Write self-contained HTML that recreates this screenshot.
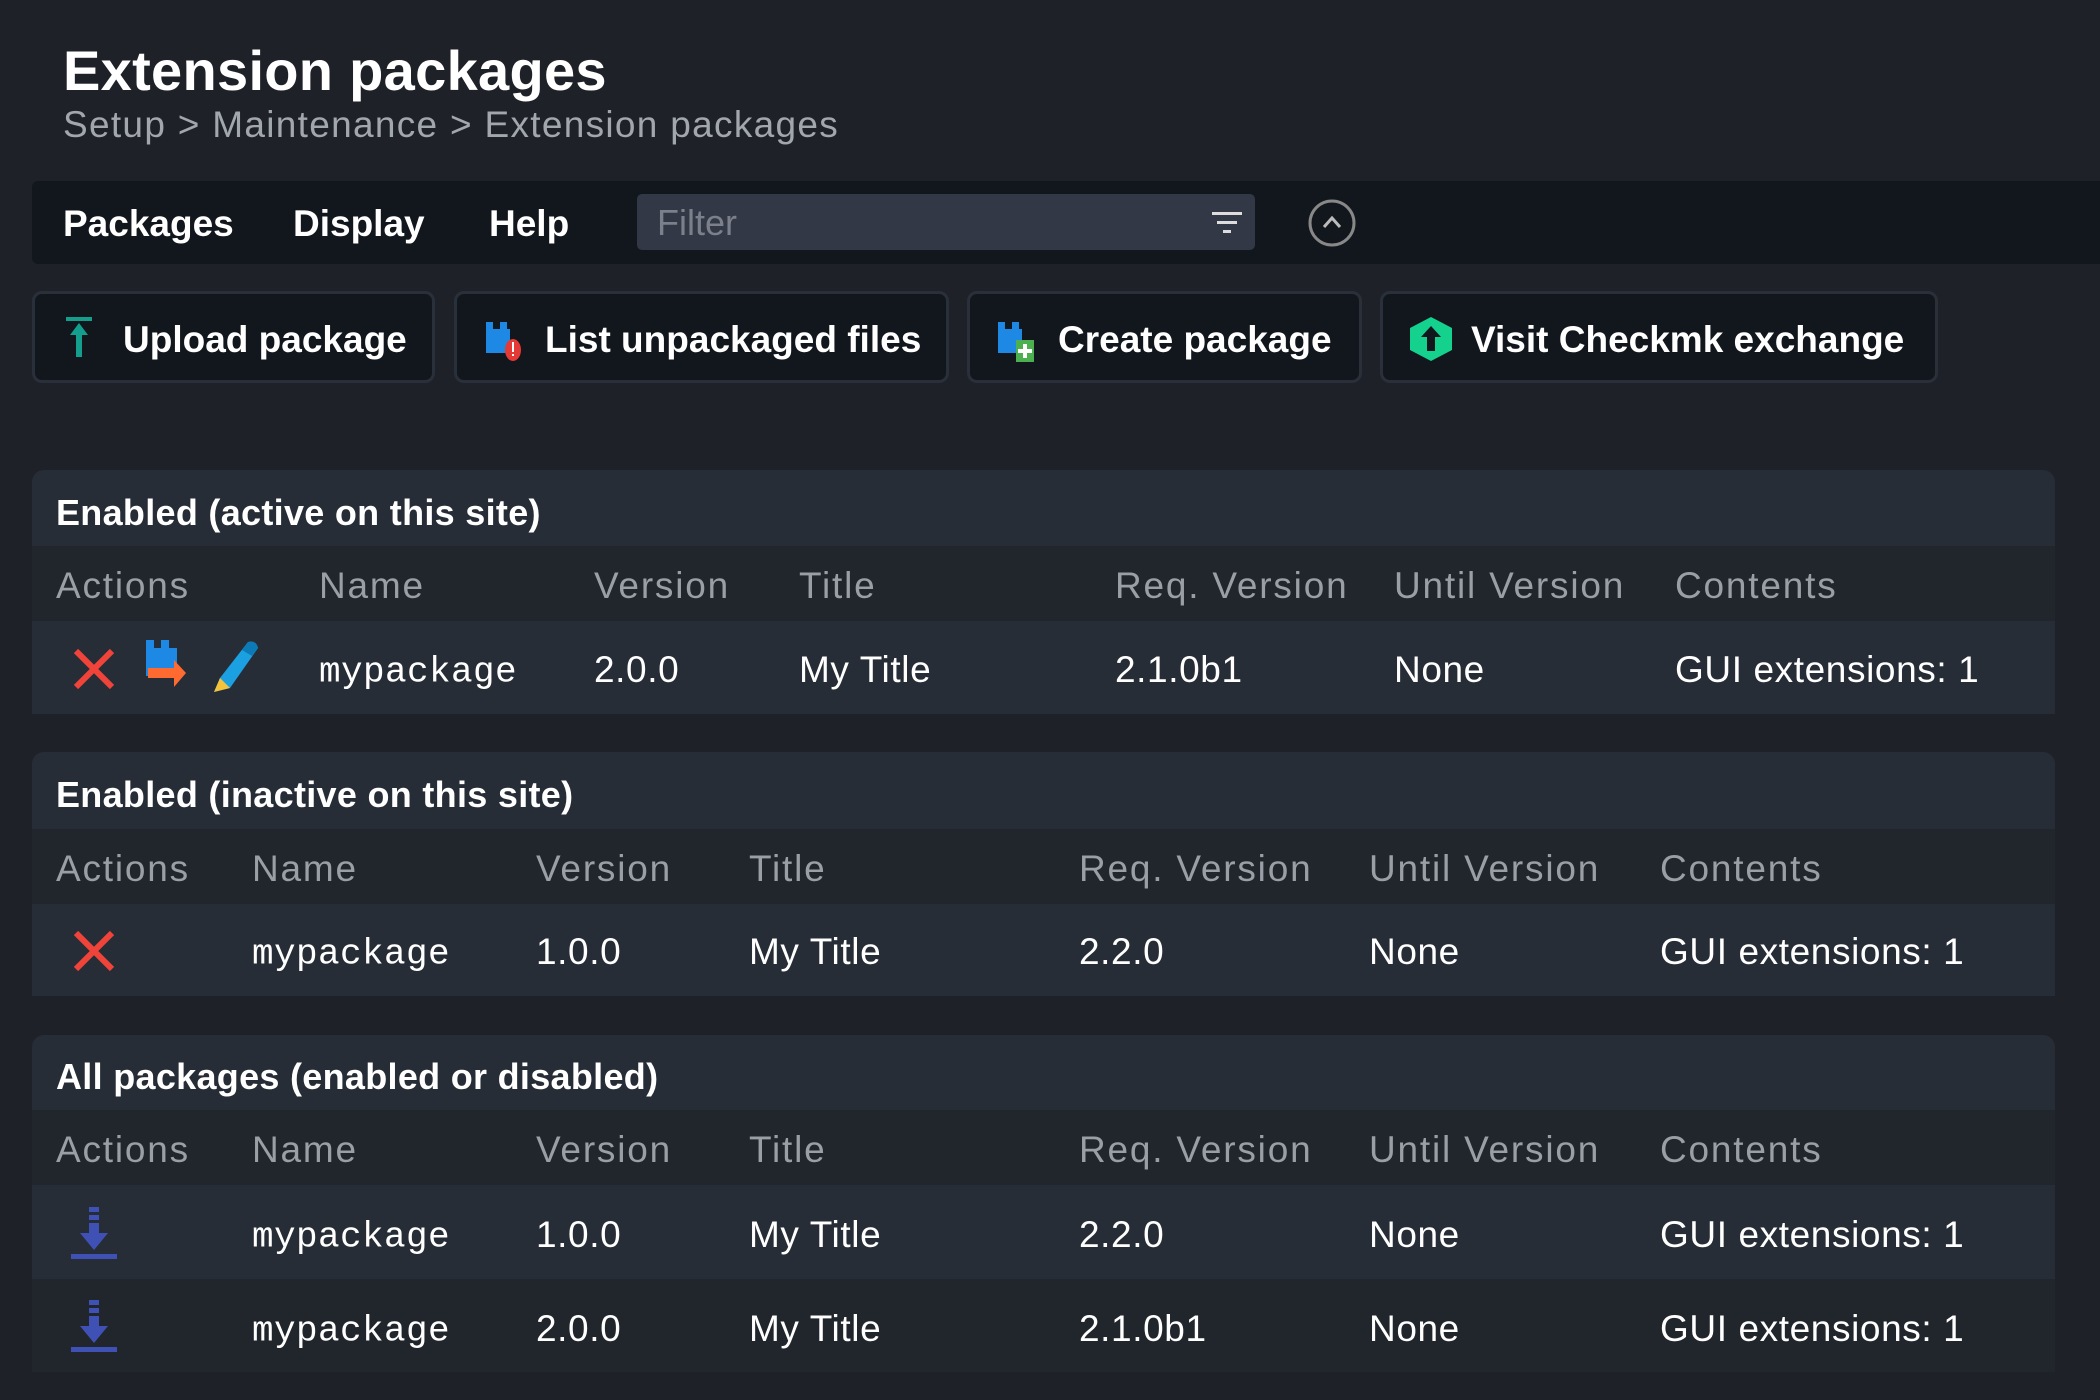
<!DOCTYPE html>
<html><head><meta charset="utf-8"><style>
*{margin:0;padding:0;box-sizing:border-box}
body{width:2100px;height:1400px;background:#1e2128;font-family:"Liberation Sans",sans-serif;color:#fff;position:relative;overflow:hidden}
.a{position:absolute;white-space:nowrap}
h1{position:absolute;left:63px;top:38px;font-size:56px;font-weight:bold;letter-spacing:0.3px}
.bc{left:63px;top:104px;font-size:37px;color:#a2a6ad;letter-spacing:1.3px}
.menu{left:32px;top:181px;width:2068px;height:83px;background:#12171d;border-radius:6px 0 0 6px}
.mi{top:224px;transform:translateY(-50%);font-size:37px;font-weight:bold}
.filter{left:637px;top:194px;width:618px;height:56px;background:#323845;border-radius:5px;color:#7b808a;font-size:36px;line-height:58px;padding-left:20px}
.btn{top:291px;height:92px;background:#12171d;border:3px solid #2a303a;border-radius:10px;font-size:37px;font-weight:bold;line-height:92px}
.sec{left:32px;width:2023px;background:#272d36;border-radius:12px 12px 0 0}
.st{font-size:36px;font-weight:bold;left:56px;letter-spacing:0.3px}
.hd{left:32px;width:2023px;background:#21252c}
.row{left:32px;width:2023px;background:#272d36}
.row2{background:#21252c}
.c{font-size:37px;transform:translateY(-50%);margin-top:2px;letter-spacing:0.6px}
.h{color:#9a9ea5;letter-spacing:1.8px}
.m{font-family:"Liberation Mono",monospace;font-size:36px;letter-spacing:0.4px}
</style></head><body>
<h1>Extension packages</h1>
<div class="a bc">Setup &gt; Maintenance &gt; Extension packages</div>
<div class="a menu"></div>
<div class="a mi" style="left:63px">Packages</div>
<div class="a mi" style="left:293px">Display</div>
<div class="a mi" style="left:489px">Help</div>
<div class="a filter">Filter</div>
<svg class="a" style="left:1212px;top:210px" width="30" height="26"><rect x="0" y="2" width="30" height="3" fill="#ddd"/><rect x="5" y="11" width="20" height="3" fill="#ddd"/><rect x="11" y="20" width="8" height="3" fill="#ddd"/></svg>
<svg class="a" style="left:1307px;top:198px" width="50" height="50"><circle cx="25" cy="25" r="22" fill="none" stroke="#888" stroke-width="3"/><path d="M17 29 L25 20 L33 29" fill="none" stroke="#bbb" stroke-width="3"/></svg>

<div class="a btn" style="left:32px;width:403px;padding-left:88px">Upload package</div>
<svg class="a" style="left:64px;top:316px" width="32" height="42"><rect x="2" y="1" width="26" height="4" fill="#149e8e"/><path d="M15 7 L24 19 L18 19 L18 41 L12 41 L12 19 L6 19Z" fill="#149e8e"/></svg>
<div class="a btn" style="left:454px;width:495px;padding-left:88px">List unpackaged files</div>
<svg class="a" style="left:486px;top:322px" width="38" height="42"><rect x="0" y="0" width="7" height="8" fill="#1e88e5"/><rect x="14" y="0" width="7" height="8" fill="#1e88e5"/><rect x="0" y="7" width="24" height="24" fill="#1e88e5"/><ellipse cx="27" cy="28" rx="8" ry="11" fill="#e53935"/><rect x="26" y="20" width="2" height="10" fill="#fff"/><rect x="26" y="32" width="2" height="2" fill="#fff"/></svg>
<div class="a btn" style="left:967px;width:395px;padding-left:88px">Create package</div>
<svg class="a" style="left:998px;top:322px" width="40" height="42"><rect x="0" y="0" width="7" height="8" fill="#1e88e5"/><rect x="14" y="0" width="7" height="8" fill="#1e88e5"/><rect x="0" y="7" width="24" height="24" fill="#1e88e5"/><rect x="18" y="18" width="18" height="22" fill="#4caf50"/><rect x="25" y="22" width="4" height="14" fill="#fff"/><rect x="20" y="27" width="14" height="4" fill="#fff"/></svg>
<div class="a btn" style="left:1380px;width:558px;padding-left:88px">Visit Checkmk exchange</div>
<svg class="a" style="left:1408px;top:316px" width="46" height="46"><path d="M23 1 L44 12 L44 34 L23 45 L2 34 L2 12Z" fill="#15d18e"/><path d="M23 10 L33 21 L27 21 L27 35 L19 35 L19 21 L13 21Z" fill="#12171d"/></svg>

<div class="a sec" style="top:470px;height:76px"></div>
<div class="a st" style="top:492px">Enabled (active on this site)</div>
<div class="a hd" style="top:546px;height:75px"></div>
<div class="a row" style="top:621px;height:93px"></div>
<div class="a c h" style="top:584px;left:56px">Actions</div>
<div class="a c h" style="top:584px;left:319px">Name</div>
<div class="a c h" style="top:584px;left:594px">Version</div>
<div class="a c h" style="top:584px;left:799px">Title</div>
<div class="a c h" style="top:584px;left:1115px">Req. Version</div>
<div class="a c h" style="top:584px;left:1394px">Until Version</div>
<div class="a c h" style="top:584px;left:1675px">Contents</div>
<svg class="a" style="left:73px;top:648px" width="42" height="42"><path d="M3 3 L39 39 M39 3 L3 39" stroke="#f0443a" stroke-width="6"/></svg>
<svg class="a" style="left:144px;top:640px" width="56" height="56"><rect x="2" y="0" width="8" height="9" fill="#1e88e5"/><rect x="17" y="0" width="8" height="9" fill="#1e88e5"/><rect x="2" y="8" width="31" height="28" fill="#1e88e5"/><path d="M4 28 L30 28 L30 20 L42 33 L30 47 L30 38 L4 38Z" fill="#ff6a30"/></svg>
<svg class="a" style="left:212px;top:640px" width="54" height="54"><path d="M36 2 Q44 0 46 8 L18 48 L2 52 L8 38Z" fill="#1ba1e2"/><path d="M2 52 L8 38 L18 48Z" fill="#f5c33b"/><path d="M36 2 Q44 0 46 8 L40 16 L30 10Z" fill="#0d7ab8"/></svg>
<div class="a c m" style="top:670px;left:319px">mypackage</div>
<div class="a c" style="top:668px;left:594px">2.0.0</div>
<div class="a c" style="top:668px;left:799px">My Title</div>
<div class="a c" style="top:668px;left:1115px">2.1.0b1</div>
<div class="a c" style="top:668px;left:1394px">None</div>
<div class="a c" style="top:668px;left:1675px">GUI extensions: 1</div>

<div class="a sec" style="top:752px;height:77px"></div>
<div class="a st" style="top:774px">Enabled (inactive on this site)</div>
<div class="a hd" style="top:829px;height:75px"></div>
<div class="a row" style="top:904px;height:92px"></div>
<div class="a c h" style="top:867px;left:56px">Actions</div>
<div class="a c h" style="top:867px;left:252px">Name</div>
<div class="a c h" style="top:867px;left:536px">Version</div>
<div class="a c h" style="top:867px;left:749px">Title</div>
<div class="a c h" style="top:867px;left:1079px">Req. Version</div>
<div class="a c h" style="top:867px;left:1369px">Until Version</div>
<div class="a c h" style="top:867px;left:1660px">Contents</div>
<svg class="a" style="left:73px;top:930px" width="42" height="42"><path d="M3 3 L39 39 M39 3 L3 39" stroke="#f0443a" stroke-width="6"/></svg>
<div class="a c m" style="top:952px;left:252px">mypackage</div>
<div class="a c" style="top:950px;left:536px">1.0.0</div>
<div class="a c" style="top:950px;left:749px">My Title</div>
<div class="a c" style="top:950px;left:1079px">2.2.0</div>
<div class="a c" style="top:950px;left:1369px">None</div>
<div class="a c" style="top:950px;left:1660px">GUI extensions: 1</div>

<div class="a sec" style="top:1035px;height:75px"></div>
<div class="a st" style="top:1056px">All packages (enabled or disabled)</div>
<div class="a hd" style="top:1110px;height:75px"></div>
<div class="a row" style="top:1185px;height:94px"></div>
<div class="a row row2" style="top:1279px;height:93px"></div>
<div class="a c h" style="top:1148px;left:56px">Actions</div>
<div class="a c h" style="top:1148px;left:252px">Name</div>
<div class="a c h" style="top:1148px;left:536px">Version</div>
<div class="a c h" style="top:1148px;left:749px">Title</div>
<div class="a c h" style="top:1148px;left:1079px">Req. Version</div>
<div class="a c h" style="top:1148px;left:1369px">Until Version</div>
<div class="a c h" style="top:1148px;left:1660px">Contents</div>
<svg class="a" style="left:70px;top:1207px" width="48" height="54"><rect x="19" y="0" width="10" height="5" fill="#3f51b5"/><rect x="19" y="8" width="10" height="5" fill="#3f51b5"/><path d="M19 16 L29 16 L29 26 L38 26 L24 43 L10 26 L19 26Z" fill="#3f51b5"/><rect x="1" y="47" width="46" height="5" fill="#3f51b5"/></svg>
<svg class="a" style="left:70px;top:1300px" width="48" height="54"><rect x="19" y="0" width="10" height="5" fill="#3f51b5"/><rect x="19" y="8" width="10" height="5" fill="#3f51b5"/><path d="M19 16 L29 16 L29 26 L38 26 L24 43 L10 26 L19 26Z" fill="#3f51b5"/><rect x="1" y="47" width="46" height="5" fill="#3f51b5"/></svg>
<div class="a c m" style="top:1235px;left:252px">mypackage</div>
<div class="a c" style="top:1233px;left:536px">1.0.0</div>
<div class="a c" style="top:1233px;left:749px">My Title</div>
<div class="a c" style="top:1233px;left:1079px">2.2.0</div>
<div class="a c" style="top:1233px;left:1369px">None</div>
<div class="a c" style="top:1233px;left:1660px">GUI extensions: 1</div>
<div class="a c m" style="top:1329px;left:252px">mypackage</div>
<div class="a c" style="top:1327px;left:536px">2.0.0</div>
<div class="a c" style="top:1327px;left:749px">My Title</div>
<div class="a c" style="top:1327px;left:1079px">2.1.0b1</div>
<div class="a c" style="top:1327px;left:1369px">None</div>
<div class="a c" style="top:1327px;left:1660px">GUI extensions: 1</div>
</body></html>
